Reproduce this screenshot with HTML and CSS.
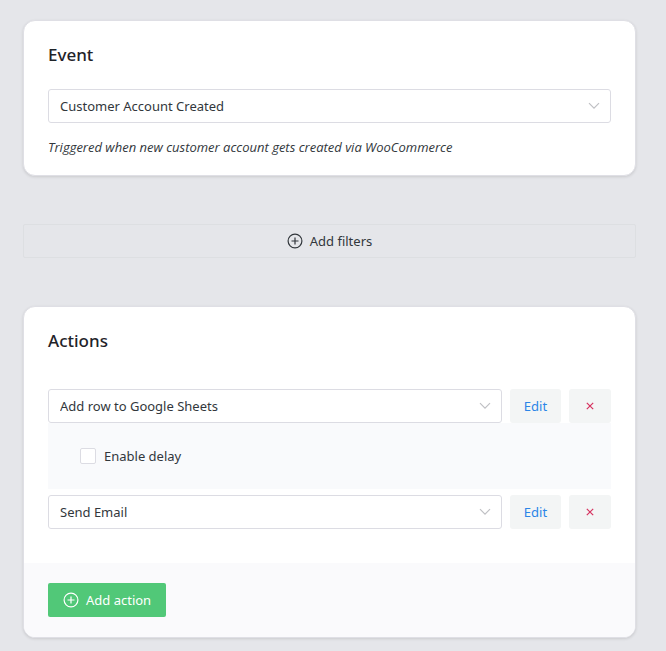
FILE: index.html
```html
<!DOCTYPE html>
<html lang="en">
<head>
<meta charset="utf-8">
<meta name="viewport" content="width=device-width, initial-scale=1">
<title>Workflow</title>
<link rel="stylesheet" href="styles.css">
</head>
<body>
<main class="workflow">
  <section class="card event">
    <h2 class="card-title">Event</h2>
    <div class="select-box">
      <select class="select" aria-label="Event"><option>Customer Account Created</option></select>
      <svg class="chevron" viewBox="0 0 12 8" aria-hidden="true"><path d="M1 1.2 6 6.2 11 1.2"/></svg>
    </div>
    <p class="hint">Triggered when new customer account gets created via WooCommerce</p>
  </section>

  <button class="add-filters" type="button">
    <svg class="plus" viewBox="0 0 16 16" aria-hidden="true"><circle cx="8" cy="8" r="6.9"/><path d="M8 4.5v7M4.5 8h7"/></svg>
    Add filters
  </button>

  <section class="card actions">
    <h2 class="card-title">Actions</h2>
    <div class="action-list">
      <div class="action-row">
        <div class="select-box">
          <select class="select" aria-label="First action"><option>Add row to Google Sheets</option></select>
          <svg class="chevron" viewBox="0 0 12 8" aria-hidden="true"><path d="M1 1.2 6 6.2 11 1.2"/></svg>
        </div>
        <button class="edit" type="button">Edit</button>
        <button class="remove" type="button" aria-label="Remove"><svg class="cross" viewBox="0 0 8 8" aria-hidden="true"><path d="M.8.8 7.2 7.2M7.2.8.8 7.2"/></svg></button>
      </div>
      <div class="delay">
        <label class="delay-label"><input class="checkbox" type="checkbox">Enable delay</label>
      </div>
      <div class="action-row">
        <div class="select-box">
          <select class="select" aria-label="Second action"><option>Send Email</option></select>
          <svg class="chevron" viewBox="0 0 12 8" aria-hidden="true"><path d="M1 1.2 6 6.2 11 1.2"/></svg>
        </div>
        <button class="edit" type="button">Edit</button>
        <button class="remove" type="button" aria-label="Remove"><svg class="cross" viewBox="0 0 8 8" aria-hidden="true"><path d="M.8.8 7.2 7.2M7.2.8.8 7.2"/></svg></button>
      </div>
    </div>
    <footer class="card-footer">
      <button class="add-action" type="button">
        <svg class="plus" viewBox="0 0 16 16" aria-hidden="true"><circle cx="8" cy="8" r="6.9"/><path d="M8 4.5v7M4.5 8h7"/></svg>
        Add action
      </button>
    </footer>
  </section>
</main>
</body>
</html>
```
FILE: styles.css
```css
* {
  box-sizing: border-box;
}

body {
  margin: 0;
  background: #e5e6ea;
  color: #32373c;
  font: 13px/20px "Noto Sans", "Open Sans", sans-serif;
}

button,
select {
  font: inherit;
  color: inherit;
}

.workflow {
  display: flex;
  flex-direction: column;
  gap: 48px;
  padding: 20px 30px 13px 23px;
}

.card {
  overflow: hidden;
  background: #fff;
  border: 1px solid #dfdfe5;
  border-radius: 12px;
  box-shadow: 0 1px 3px rgba(0, 0, 0, 0.12);
}

.event {
  padding: 24px 24px 18px;
}

.card-title {
  margin: 0;
  color: #1f2329;
  font-size: 17px;
  font-weight: 500;
  line-height: 20px;
}

.event .select-box {
  margin-top: 24px;
}

.select-box {
  position: relative;
  flex: 1;
}

.select {
  display: block;
  width: 100%;
  height: 34px;
  padding: 0 32px 0 11px;
  appearance: none;
  background: #fff;
  border: 1px solid #dcdce3;
  border-radius: 3px;
}

.chevron {
  position: absolute;
  top: 13px;
  right: 11px;
  width: 12px;
  height: 8px;
  fill: none;
  stroke: #bfc0c4;
  stroke-width: 1.2;
  pointer-events: none;
}

.hint {
  margin: 14px 0 0;
  font-family: "Open Sans", "Noto Sans", sans-serif;
  font-style: italic;
  line-height: 20px;
}

.plus {
  width: 16px;
  height: 16px;
  fill: none;
  stroke: currentColor;
  stroke-width: 1.2;
}

.add-filters,
.add-action {
  display: flex;
  align-items: center;
  justify-content: center;
  gap: 7px;
  height: 34px;
  border-radius: 2px;
}

.add-filters {
  background: transparent;
  border: 1px solid #dddfe2;
}

.actions .card-title {
  padding: 24px 24px 0;
}

.action-list {
  padding: 38px 24px 34px;
}

.action-row {
  display: flex;
  gap: 8px;
}

.edit,
.remove {
  display: flex;
  align-items: center;
  justify-content: center;
  height: 34px;
  padding: 0;
  background: #f3f5f5;
  border: 0;
  border-radius: 3px;
}

.edit {
  width: 51px;
  color: #2b85e7;
}

.remove {
  width: 42px;
  color: #d63360;
}

.cross {
  width: 8px;
  height: 8px;
  stroke: currentColor;
  stroke-width: 1.2;
}

.delay {
  margin-bottom: 6px;
  padding: 23px 32px;
  background: #f9fafc;
}

.delay-label {
  display: flex;
  align-items: center;
  gap: 8px;
}

.checkbox {
  width: 16px;
  height: 16px;
  margin: 0;
  appearance: none;
  background: #fff;
  border: 1px solid #dcdce3;
  border-radius: 2px;
}

.checkbox:checked {
  background: #2b85e7;
}

.card-footer {
  display: flex;
  padding: 20px 24px;
  background: #fafafc;
}

.add-action {
  padding: 0 15px;
  background: #51c878;
  border: 0;
  color: #fff;
}
```
